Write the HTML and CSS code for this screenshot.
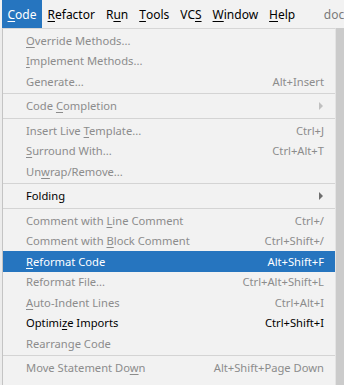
FILE: index.html
```html
<!DOCTYPE html>
<html lang="en">
<head>
    <meta charset="UTF-8">
    <title>Code menu</title>
    <link rel="stylesheet" href="styles.css">
</head>
<body>

    <header class="menubar">
        <span class="menubar-item is-active"><u>C</u>ode</span>
        <span class="menubar-item"><u>R</u>efactor</span>
        <span class="menubar-item">R<u>u</u>n</span>
        <span class="menubar-item"><u>T</u>ools</span>
        <span class="menubar-item">VC<u>S</u></span>
        <span class="menubar-item"><u>W</u>indow</span>
        <span class="menubar-item"><u>H</u>elp</span>
        <span class="menubar-title">docker</span>
    </header>

    <div class="workspace">
        <ul class="popup">
            <li class="menu-item is-disabled"><span class="label"><u>O</u>verride Methods...</span></li>
            <li class="menu-item is-disabled"><span class="label"><u>I</u>mplement Methods...</span></li>
            <li class="menu-item is-disabled"><span class="label">Generate...</span><span class="shortcut">Alt+Insert</span></li>
            <li class="separator"></li>
            <li class="menu-item is-disabled"><span class="label">Code <u>C</u>ompletion</span><span class="arrow"></span></li>
            <li class="separator"></li>
            <li class="menu-item is-disabled"><span class="label">Insert Live <u>T</u>emplate...</span><span class="shortcut">Ctrl+J</span></li>
            <li class="menu-item is-disabled"><span class="label"><u>S</u>urround With...</span><span class="shortcut">Ctrl+Alt+T</span></li>
            <li class="menu-item is-disabled"><span class="label">Un<u>w</u>rap/Remove...</span></li>
            <li class="separator"></li>
            <li class="menu-item"><span class="label">Folding</span><span class="arrow"></span></li>
            <li class="separator"></li>
            <li class="menu-item is-disabled"><span class="label">Comment with <u>L</u>ine Comment</span><span class="shortcut">Ctrl+/</span></li>
            <li class="menu-item is-disabled"><span class="label">Comment with <u>B</u>lock Comment</span><span class="shortcut">Ctrl+Shift+/</span></li>
            <li class="menu-item is-selected"><span class="label"><u>R</u>eformat Code</span><span class="shortcut">Alt+Shift+F</span></li>
            <li class="menu-item is-disabled"><span class="label">Reformat File...</span><span class="shortcut">Ctrl+Alt+Shift+L</span></li>
            <li class="menu-item is-disabled"><span class="label"><u>A</u>uto-Indent Lines</span><span class="shortcut">Ctrl+Alt+I</span></li>
            <li class="menu-item"><span class="label">Optimi<u>z</u>e Imports</span><span class="shortcut">Ctrl+Shift+I</span></li>
            <li class="menu-item is-disabled"><span class="label">Rearrange Code</span></li>
            <li class="separator"></li>
            <li class="menu-item is-disabled"><span class="label">Move Statement Do<u>w</u>n</span><span class="shortcut">Alt+Shift+Page Down</span></li>
        </ul>
        <div class="side"></div>
    </div>

</body>
</html>
```

FILE: styles.css
```css
/* 基本 */
body {
    font-family: "Noto Sans", "Open Sans", sans-serif;
    font-size: 11.2px;
    margin: 0;
    background-color: #f2f2f2;
    color: #000;
    overflow: hidden;
}
u { text-underline-offset: 2px; text-decoration-thickness: 1px; }

/* --- メニューバー --- */
.menubar { display: flex; align-items: stretch; height: 28px; padding-left: 2px; background-color: #f2f2f2; white-space: nowrap; font-size: 12px; }
.menubar-item { display: flex; align-items: center; padding: 0 5.5px; }
.menubar-item.is-active { background-color: #2675bf; color: #fff; }
.menubar-title { display: flex; align-items: center; margin-left: 23px; color: #7a7a7a; }

/* --- ポップアップ --- */
.workspace { display: flex; height: 357px; background-color: #ececec; padding-left: 2px; }
.popup {
    list-style: none;
    margin: 0;
    padding: 1px 0 0 0;
    width: 332px;
    background-color: #f2f2f2;
    border-top: 1px solid #d6d6d6;
    border-left: 1px solid #c4c4c4;
    border-right: 1px solid #e4e4e4;
}
.side { flex: 1; background-color: #cbcbcb; }

.menu-item { display: flex; align-items: center; height: 20.5px; padding: 0 11px 0 23px; white-space: nowrap; }
.menu-item .label { flex: 1; }
.menu-item .shortcut { text-align: right; }
.menu-item.is-disabled { color: #8c8c8c; }
.menu-item.is-selected { background-color: #2675bf; color: #fff; }

.separator { height: 1px; background-color: #d4d4d4; margin: 1.5px 0; }

.arrow { width: 0; height: 0; border-top: 4px solid transparent; border-bottom: 4px solid transparent; border-left: 4px solid #6e6e6e; margin-right: 1px; }
.is-disabled .arrow { border-left-color: #c0c0c0; }
```
